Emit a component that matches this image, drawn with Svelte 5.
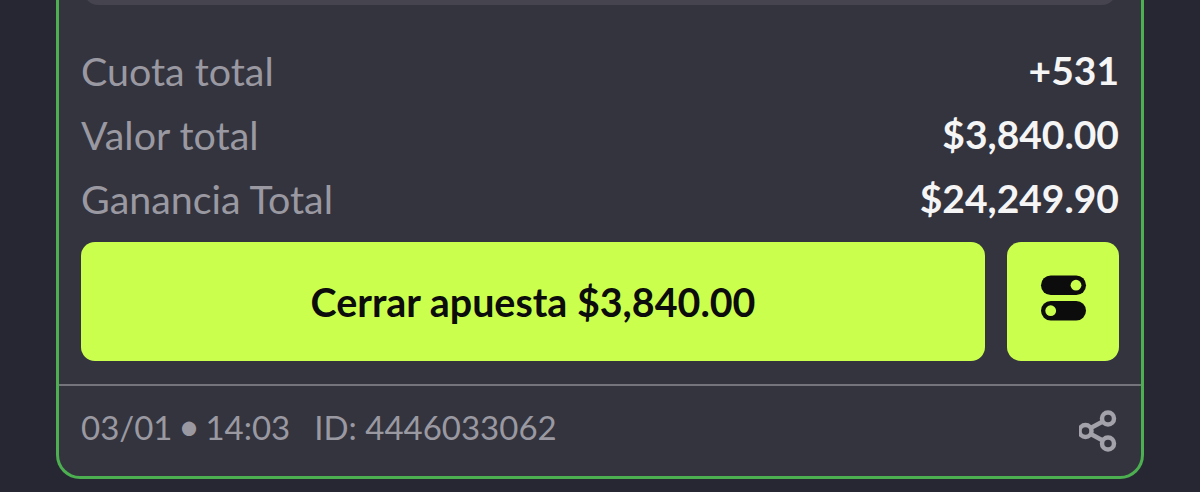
<script>
  const rows = [
    { label: 'Cuota total', value: '+531' },
    { label: 'Valor total', value: '$3,840.00' },
    { label: 'Ganancia Total', value: '$24,249.90' }
  ];
</script>

<div class="page">
  <div class="card">
    <div class="body">
      <div class="box"></div>
      <div class="rows">
        {#each rows as r}
          <div class="row"><span class="label">{r.label}</span><span class="value">{r.value}</span></div>
        {/each}
      </div>
      <div class="actions">
        <button class="primary">Cerrar apuesta $3,840.00</button>
        <button class="square" aria-label="Opciones">
          <svg width="48" height="46" viewBox="0 0 48 46">
            <rect x="2" y="0.5" width="45" height="19.5" rx="9.75" fill="#0c0c0c" />
            <circle cx="37" cy="10.2" r="5.4" fill="#cbff4d" />
            <rect x="2" y="26" width="45" height="19.5" rx="9.75" fill="#0c0c0c" />
            <circle cx="11.7" cy="35.7" r="5.4" fill="#cbff4d" />
          </svg>
        </button>
      </div>
    </div>
    <div class="footer">
      <div class="meta"><span class="when">03/01 <span class="dot">•</span> 14:03</span><span>ID: 4446033062</span></div>
      <svg class="share" width="40" height="42" viewBox="0 0 40 42" fill="none" stroke="#a3a2aa" stroke-width="4.5">
        <circle cx="29" cy="8.5" r="6" />
        <circle cx="29" cy="33.5" r="6" />
        <circle cx="6.5" cy="21" r="6" />
        <path d="M11.7 18 23.8 11.5M11.7 24 23.8 30.5" />
      </svg>
    </div>
  </div>
</div>

<style>
  :global(body) {
    margin: 0;
    background: #272734;
  }
  .page {
    height: 492px;
    overflow: hidden;
    display: flex;
    flex-direction: column;
    justify-content: flex-end;
    padding: 0 56px 13px;
    box-sizing: border-box;
    font-family: Lato, "Open Sans", sans-serif;
  }
  .card {
    flex: none;
    background: #34343e;
    border: 3px solid #4caf50;
    border-radius: 0 0 24px 24px;
    border-top: none;
  }
  .body {
    padding: 0 22px 23px;
  }
  .box {
    height: 40px;
    margin: -35px 3px 0;
    background: #45444f;
    border-radius: 0 0 14px 14px;
  }
  .rows {
    margin-top: 33px;
    display: flex;
    flex-direction: column;
  }
  .row {
    height: 64px;
    display: flex;
    justify-content: space-between;
    align-items: center;
  }
  .label {
    color: #9a99a2;
    font-size: 39.4px;
  }
  .value {
    color: #f5f5f6;
    font-weight: 700;
    font-size: 39px;
  }
  .actions {
    display: flex;
    gap: 22px;
    margin-top: 12px;
  }
  button {
    border: none;
    background: #cbff4d;
    border-radius: 14px;
    height: 119px;
    color: #0c0c0c;
    font-family: inherit;
    padding: 0;
  }
  .primary {
    flex: 1;
    font-size: 39.4px;
    font-weight: 700;
  }
  .square {
    width: 112px;
    display: flex;
    align-items: center;
    justify-content: center;
    padding-bottom: 8px;
  }
  .footer {
    border-top: 2px solid #75747c;
    height: 90px;
    padding: 0 22px;
    display: flex;
    justify-content: space-between;
    align-items: center;
    color: #9a99a2;
    font-size: 33px;
  }
  .meta {
    display: flex;
    gap: 24px;
    padding-bottom: 8px;
  }
  .when {
    word-spacing: -3px;
  }
  .dot {
    font-size: 38px;
    line-height: 1px;
  }
</style>
